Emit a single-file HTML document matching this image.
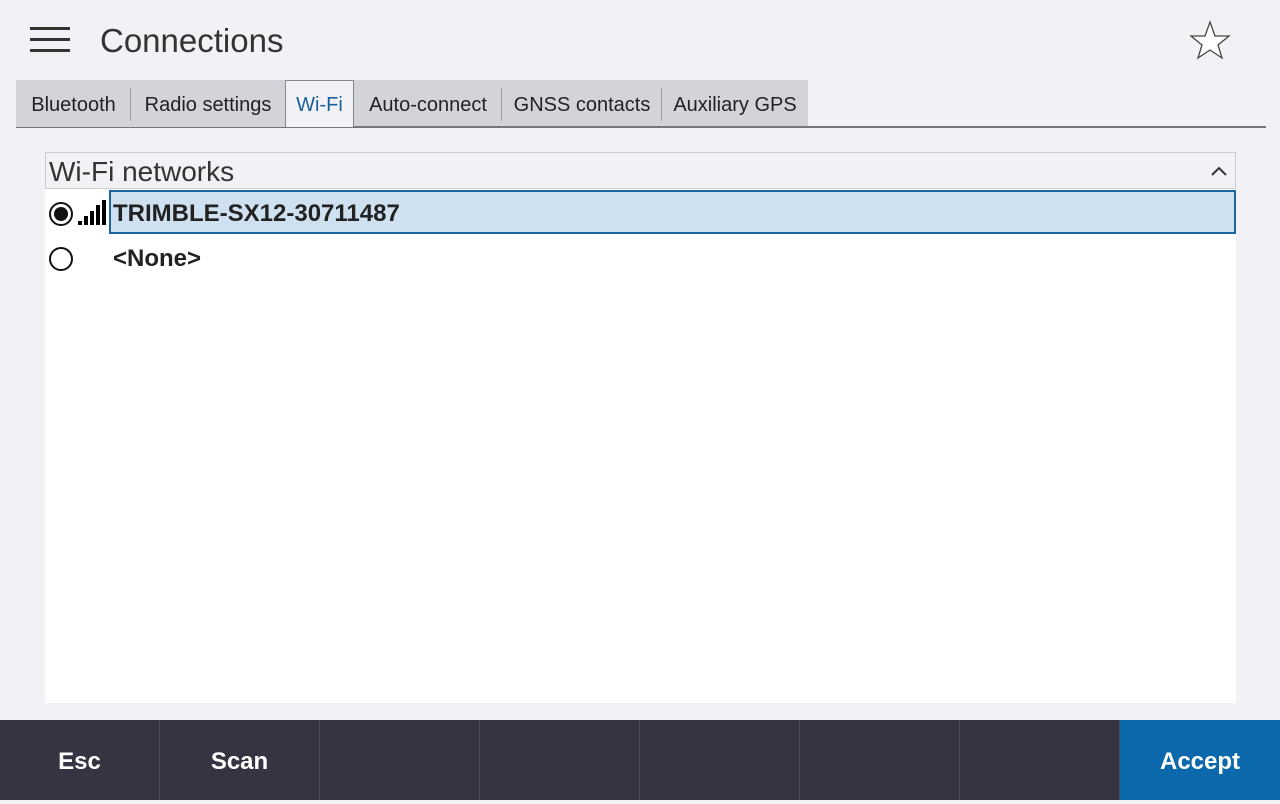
<!DOCTYPE html>
<html><head><style>
*{margin:0;padding:0;box-sizing:border-box}
body{width:1280px;height:800px;background:#f1f1f6;font-family:"Liberation Sans",sans-serif;position:relative;overflow:hidden;color:#222}
.abs{position:absolute}
.tab{position:absolute;top:80px;height:47px;background:#d3d3da;font-size:20px;line-height:50px;text-align:center;color:#222}
.sep{position:absolute;top:88px;width:1px;height:33px;background:#999}
.btn{position:absolute;top:720px;height:80px;width:159px;background:#343443;color:#fff;font-weight:bold;font-size:24px;line-height:84px;text-align:center}
</style></head><body>
<div class="abs" style="left:30px;top:27px;width:40px;height:3px;background:#333"></div>
<div class="abs" style="left:30px;top:38px;width:40px;height:3px;background:#333"></div>
<div class="abs" style="left:30px;top:49px;width:40px;height:3px;background:#333"></div>
<div class="abs" style="left:100px;top:22px;font-size:33px;color:#333">Connections</div>
<svg class="abs" style="left:1188px;top:20px" width="44" height="40" viewBox="0 0 44 40"><polygon points="22,2 27,16 41,16 30,25 34,38 22,30 10,38 14,25 3,16 17,16" fill="#fff" stroke="#444" stroke-width="1.3"/></svg>
<div class="tab" style="left:16px;width:115px">Bluetooth</div>
<div class="tab" style="left:131px;width:154px">Radio settings</div>
<div class="tab" style="left:285px;width:69px;background:#f1f1f6;border:1px solid #888;border-bottom:none;color:#1a5f9c;height:48px;line-height:48px">Wi-Fi</div>
<div class="tab" style="left:354px;width:148px">Auto-connect</div>
<div class="tab" style="left:502px;width:160px">GNSS contacts</div>
<div class="tab" style="left:662px;width:146px">Auxiliary GPS</div>
<div class="sep" style="left:130px"></div>
<div class="sep" style="left:501px"></div>
<div class="sep" style="left:661px"></div>
<div class="abs" style="left:16px;top:127px;width:1250px;height:1px;background:#777"></div>
<div class="abs" style="left:354px;top:126px;width:912px;height:1px;background:#777"></div>
<div class="abs" style="left:45px;top:152px;width:1191px;height:37px;border:1px solid #ccc;background:#f1f1f6"></div>
<div class="abs" style="left:49px;top:156px;font-size:28px;color:#333">Wi-Fi networks</div>
<svg class="abs" style="left:1210px;top:165px" width="18" height="12"><polyline points="2,10 9,3 16,10" fill="none" stroke="#333" stroke-width="2"/></svg>
<div class="abs" style="left:45px;top:189px;width:1191px;height:514px;background:#fff"></div>
<div class="abs" style="left:109px;top:190px;width:1127px;height:44px;background:#cfe1f0;border:2px solid #1e64a0"></div>
<div class="abs" style="left:49px;top:202px;width:24px;height:24px;border:2px solid #111;border-radius:50%;background:#fff"></div>
<div class="abs" style="left:54px;top:207px;width:14px;height:14px;border-radius:50%;background:#111"></div>
<svg class="abs" style="left:78px;top:200px" width="30" height="26"><rect x="0" y="21" width="4" height="4"/><rect x="6" y="16" width="4" height="9"/><rect x="12" y="11" width="4" height="14"/><rect x="18" y="5" width="4" height="20"/><rect x="24" y="0" width="4" height="25"/></svg>
<div class="abs" style="left:113px;top:200px;font-size:24px;font-weight:bold;color:#222">TRIMBLE-SX12-30711487</div>
<div class="abs" style="left:49px;top:247px;width:24px;height:24px;border:2px solid #111;border-radius:50%;background:#fff"></div>
<div class="abs" style="left:113px;top:245px;font-size:24px;font-weight:bold;color:#222">&lt;None&gt;</div>
<div class="abs" style="left:0;top:720px;width:1280px;height:80px;background:#4a4a58"></div>
<div class="btn" style="left:0">Esc</div>
<div class="btn" style="left:160px">Scan</div>
<div class="btn" style="left:320px"></div>
<div class="btn" style="left:480px"></div>
<div class="btn" style="left:640px"></div>
<div class="btn" style="left:800px"></div>
<div class="btn" style="left:960px"></div>
<div class="btn" style="left:1120px;width:160px;background:#0b68aa">Accept</div>
</body></html>
